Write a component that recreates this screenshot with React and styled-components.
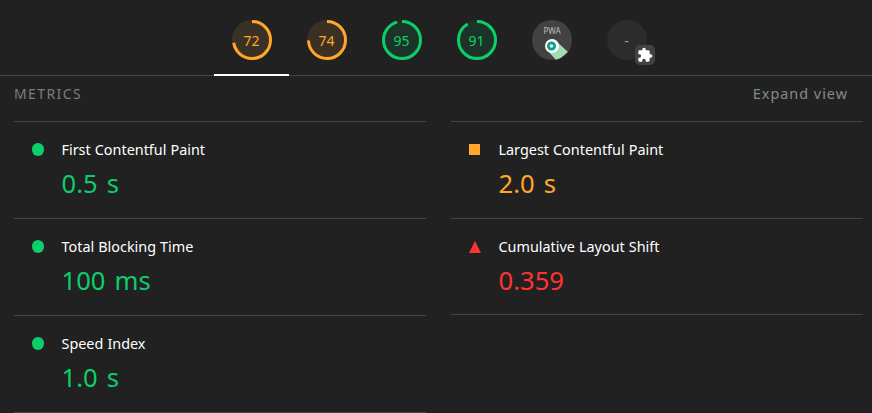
import React from "react";
import styled, { createGlobalStyle } from "styled-components";

const GREEN = "#0cce6b";
const ORANGE_SOFT = "#ffa62b";
const RED = "#ff3333";

const gauges = [
  { score: 72, color: ORANGE_SOFT, fill: "#3a3023" },
  { score: 74, color: ORANGE_SOFT, fill: "#3a3023" },
  { score: 95, color: GREEN, fill: "#1d3327" },
  { score: 91, color: GREEN, fill: "#1d3327" },
];

const metricsLeft = [
  { name: "First Contentful Paint", value: "0.5 s", kind: "pass" },
  { name: "Total Blocking Time", value: "100 ms", kind: "pass" },
  { name: "Speed Index", value: "1.0 s", kind: "pass" },
];

const metricsRight = [
  { name: "Largest Contentful Paint", value: "2.0 s", kind: "average" },
  { name: "Cumulative Layout Shift", value: "0.359", kind: "fail" },
];

const kindColor = { pass: GREEN, average: ORANGE_SOFT, fail: RED };

const GlobalStyle = createGlobalStyle`
  html, body {
    margin: 0;
    height: 100%;
    background: #212121;
    overflow: hidden;
  }
  body {
    font-family: "Noto Sans", "Open Sans", "Liberation Sans", sans-serif;
  }
`;

const Page = styled.div`
  width: 872px;
  height: 413px;
  background: #212121;
  overflow: hidden;
`;

const TabBar = styled.div`
  display: flex;
  padding-left: 214px;
  height: 76px;
  box-sizing: border-box;
  border-bottom: 1px solid #444444;
`;

const Tab = styled.div`
  position: relative;
  width: 75px;
  height: 75px;
  padding-top: 20px;
  box-sizing: border-box;
  display: flex;
  justify-content: center;

  ${({ $active }) =>
    $active &&
    `&::after {
      content: "";
      position: absolute;
      left: 0;
      right: 0;
      bottom: -1px;
      height: 2px;
      background: #ffffff;
    }`}
`;

const GaugeBox = styled.div`
  position: relative;
  width: 40px;
  height: 40px;
`;

const GaugeScore = styled.span`
  position: absolute;
  inset: 0;
  display: flex;
  align-items: center;
  justify-content: center;
  font-size: 14px;
  color: ${({ $color }) => $color};
`;

const PluginBadge = styled.div`
  position: absolute;
  right: -8px;
  bottom: -5px;
  width: 20px;
  height: 20px;
  border-radius: 5px;
  background: #424242;
  display: flex;
  align-items: center;
  justify-content: center;
`;

const Header = styled.div`
  display: flex;
  justify-content: space-between;
  align-items: flex-start;
  height: 45px;
  padding: 8px 24px 0 14px;
  box-sizing: border-box;
`;

const HeaderTitle = styled.span`
  font-size: 14px;
  line-height: 20px;
  letter-spacing: 1.4px;
  color: #7d7d7d;
`;

const HeaderToggle = styled.span`
  font-size: 14.4px;
  line-height: 20px;
  letter-spacing: 1px;
  color: #7f8c8d;
`;

const Columns = styled.div`
  display: grid;
  grid-template-columns: 412px 412px;
  column-gap: 25px;
  padding-left: 14px;
`;

const MetricRow = styled.div`
  display: grid;
  grid-template-columns: 47.5px 1fr;
  height: ${({ $h }) => $h || 97}px;
  box-sizing: border-box;
  border-top: 1px solid #444444;
  padding-top: 18px;
`;

const MetricIcon = styled.div`
  display: flex;
  padding: 3px 0 0 18px;
`;

const MetricName = styled.div`
  font-size: 14.4px;
  line-height: 20px;
  word-spacing: 0.3px;
  color: #ffffff;
`;

const MetricValue = styled.div`
  font-size: 25.6px;
  line-height: 34px;
  margin-top: 7px;
  word-spacing: 2.5px;
  color: ${({ $color }) => $color};
`;

const Dot = styled.span`
  display: block;
  width: 12px;
  height: 12.5px;
  border-radius: 50%;
  background: ${GREEN};
`;

const Square = styled.span`
  display: block;
  width: 11px;
  height: 11px;
  margin-top: 1px;
  background: ${ORANGE_SOFT};
`;

const Triangle = styled.span`
  display: block;
  width: 0;
  height: 0;
  margin-top: 1px;
  border-left: 6px solid transparent;
  border-right: 6px solid transparent;
  border-bottom: 12px solid ${RED};
`;

const EndRule = styled.div`
  border-top: 1px solid #444444;
`;

function Gauge({ score, color, fill }) {
  const r = 18.5;
  const circumference = 2 * Math.PI * r;
  const length = (score / 100) * circumference;
  return (
    <GaugeBox>
      <svg width="40" height="40" viewBox="0 0 40 40">
        <circle cx="20" cy="20" r="20" fill={fill} />
        <circle
          cx="20"
          cy="20"
          r={r}
          fill="none"
          stroke={color}
          strokeWidth="3"
          strokeDasharray={`${length} ${circumference}`}
          transform="rotate(-90 20 20)"
        />
      </svg>
      <GaugeScore $color={color}>{score}</GaugeScore>
    </GaugeBox>
  );
}

function PwaBadge() {
  return (
    <GaugeBox>
      <svg width="40" height="40" viewBox="0 0 40 40">
        <defs>
          <clipPath id="pwaClip">
            <circle cx="20" cy="20" r="20" />
          </clipPath>
        </defs>
        <circle cx="20" cy="20" r="20" fill="#424242" />
        <g clipPath="url(#pwaClip)">
          <path d="M24 21 L36 32 L25 41 L15 30 Z" fill="#a2dcb0" />
        </g>
        <circle cx="20" cy="26" r="7" fill="#ffffff" />
        <circle cx="19.5" cy="26" r="4.5" fill="#0f9d8a" />
        <circle cx="19.5" cy="26" r="1.8" fill="#e8f5f0" />
        <text x="20" y="14" textAnchor="middle" fontSize="8" fill="#bdbdbd" fontFamily="Noto Sans, sans-serif">
          PWA
        </text>
      </svg>
    </GaugeBox>
  );
}

function PluginGauge() {
  return (
    <GaugeBox>
      <svg width="40" height="40" viewBox="0 0 40 40">
        <circle cx="20" cy="20" r="20" fill="#2c2c2c" />
      </svg>
      <GaugeScore $color="#9a9a9a">-</GaugeScore>
      <PluginBadge>
        <svg width="16" height="16" viewBox="0 0 24 24">
          <path
            fill="#ffffff"
            d="M20.5 11H19V7c0-1.1-.9-2-2-2h-4V3.5a2.5 2.5 0 0 0-5 0V5H4c-1.1 0-2 .9-2 2v3.8h1.5a2.7 2.7 0 0 1 0 5.4H2V20c0 1.1.9 2 2 2h3.8v-1.5a2.7 2.7 0 0 1 5.4 0V22H17c1.1 0 2-.9 2-2v-4h1.5a2.5 2.5 0 0 0 0-5z"
          />
        </svg>
      </PluginBadge>
    </GaugeBox>
  );
}

function Metric({ metric, height }) {
  return (
    <MetricRow $h={height}>
      <MetricIcon>
        {metric.kind === "pass" && <Dot />}
        {metric.kind === "average" && <Square />}
        {metric.kind === "fail" && <Triangle />}
      </MetricIcon>
      <div>
        <MetricName>{metric.name}</MetricName>
        <MetricValue $color={kindColor[metric.kind]}>{metric.value}</MetricValue>
      </div>
    </MetricRow>
  );
}

function App() {
  return (
    <Page>
      <GlobalStyle />
      <TabBar>
        {gauges.map((gauge, i) => (
          <Tab key={gauge.score} $active={i === 0}>
            <Gauge {...gauge} />
          </Tab>
        ))}
        <Tab>
          <PwaBadge />
        </Tab>
        <Tab>
          <PluginGauge />
        </Tab>
      </TabBar>
      <Header>
        <HeaderTitle>METRICS</HeaderTitle>
        <HeaderToggle>Expand view</HeaderToggle>
      </Header>
      <Columns>
        <div>
          {metricsLeft.map((metric) => (
            <Metric key={metric.name} metric={metric} />
          ))}
          <EndRule />
        </div>
        <div>
          <Metric metric={metricsRight[0]} />
          <Metric metric={metricsRight[1]} height={96} />
          <EndRule />
        </div>
      </Columns>
    </Page>
  );
}

export default App;
